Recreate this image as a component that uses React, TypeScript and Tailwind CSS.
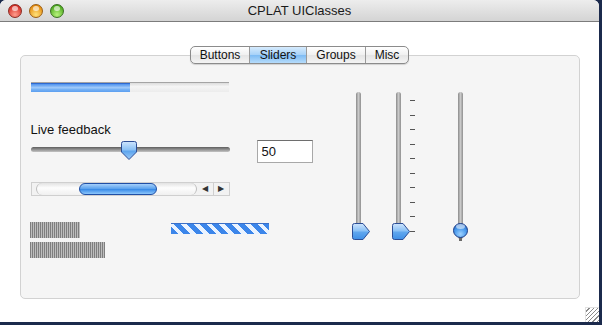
import React from 'react';

const font = "font-['Liberation_Sans',Arial,sans-serif]";

const TrafficLight: React.FC<{ from: string; to: string; ring: string }> = ({ from, to, ring }) => (
  <span
    className="relative block h-[14px] w-[14px] rounded-full border"
    style={{ background: `radial-gradient(circle at 50% 80%, ${to} 0%, ${from} 80%)`, borderColor: ring }}
  >
    <span className="absolute left-[3px] top-[1px] h-[5px] w-[6px] rounded-full bg-white/60" />
  </span>
);

const tabs = [
  { label: 'Buttons', w: 'w-[58px]' },
  { label: 'Sliders', w: 'w-[57px]', active: true },
  { label: 'Groups', w: 'w-[59px]' },
  { label: 'Misc', w: 'w-[43px]' },
];

const VThumb: React.FC<{ id: string }> = ({ id }) => (
  <svg width="18" height="17" viewBox="0 0 18 17">
    <defs>
      <linearGradient id={id} x1="0" y1="0" x2="0" y2="1">
        <stop offset="0" stopColor="#cfe5fd" />
        <stop offset="0.45" stopColor="#8cc2f6" />
        <stop offset="0.55" stopColor="#5fa6ee" />
        <stop offset="1" stopColor="#3f8fe6" />
      </linearGradient>
    </defs>
    <path
      d="M2.5 0.5 H11 L17.5 8.5 L11 16.5 H2.5 Q0.5 16.5 0.5 14.5 V2.5 Q0.5 0.5 2.5 0.5 Z"
      fill={`url(#${id})`}
      stroke="#2c4d96"
    />
  </svg>
);

const VSlider: React.FC<{ id: string; round?: boolean }> = ({ id, round }) => (
  <div className={`relative h-[150px] ${round ? 'w-[15px]' : 'w-[18px]'}`}>
    <div
      className={`h-[147px] w-[5px] rounded-full bg-[linear-gradient(to_right,#8a8a8a,#c9c9c9_50%,#8f8f8f)] ${round ? 'ml-[5px]' : 'ml-[4px]'}`}
    />
    {round ? (
      <svg className="absolute left-0 top-[130px]" width="15" height="19" viewBox="0 0 15 19">
        <defs>
          <radialGradient id={id} cx="0.5" cy="0.75" r="0.7">
            <stop offset="0" stopColor="#9fd2ff" />
            <stop offset="0.6" stopColor="#4b9bec" />
            <stop offset="1" stopColor="#2f73cc" />
          </radialGradient>
        </defs>
        <rect x="6" y="12" width="3" height="7" fill="#6a6a6a" />
        <circle cx="7.5" cy="8.5" r="7" fill={`url(#${id})`} stroke="#1f3f88" />
        <ellipse cx="7.5" cy="4.5" rx="4.5" ry="2.5" fill="#ffffff" opacity="0.55" />
      </svg>
    ) : (
      <div className="absolute left-0 top-[131px]">
        <VThumb id={id} />
      </div>
    )}
  </div>
);

export default function App() {
  return (
    <div className={`h-[325px] w-[602px] bg-[#1b2a4c] ${font}`}>
      <div className="flex h-[322px] w-[599px] flex-col overflow-hidden rounded-t-[6px] bg-white">
        {/* title bar */}
        <div className="relative flex h-[22px] shrink-0 items-center border-b border-[#7c7c7c] bg-[linear-gradient(to_bottom,#ededed,#d4d4d4)] pl-[8px]">
          <div className="flex gap-[7px]">
            <TrafficLight from="#d42a22" to="#ff9c8c" ring="#8a2a22" />
            <TrafficLight from="#e58a0c" to="#ffe27a" ring="#9a5e14" />
            <TrafficLight from="#4aa81c" to="#b8f27c" ring="#3a7020" />
          </div>
          <div className="absolute inset-x-0 top-0 flex h-[21px] items-center justify-center text-[13px] text-[#1a1a1a]">
            CPLAT UIClasses
          </div>
        </div>

        {/* content */}
        <div className="relative flex flex-1 flex-col items-center">
          {/* tabs */}
          <div className="relative z-10 mt-[24px] flex h-[18px] overflow-hidden rounded-[5px] border border-[#8b8b8b] bg-[linear-gradient(to_bottom,#ffffff,#f0f0f0_50%,#e4e4e4_51%,#f4f4f4)] text-[12px] text-[#111] shadow-[0_1px_1px_rgba(0,0,0,0.15)]">
            {tabs.map((t, i) => (
              <div
                key={t.label}
                className={`flex items-center justify-center ${t.w} ${i > 0 ? 'border-l border-[#9a9a9a]' : ''} ${
                  t.active ? 'bg-[linear-gradient(to_bottom,#d6ebfd,#a6d1f8_50%,#7dbbf4_51%,#b6dcfb)]' : ''
                }`}
              >
                {t.label}
              </div>
            ))}
          </div>

          {/* group box */}
          <div className="-mt-[9px] flex h-[244px] w-[560px] rounded-[5px] border border-[#d2d2d2] bg-[#f5f5f5]">
            {/* left column */}
            <div className="flex w-[331px] flex-col pl-[10px]">
              {/* progress bar */}
              <div className="mt-[26px] flex h-[10px] w-[198px] overflow-hidden border-t border-[#a4a4a4] bg-[linear-gradient(to_bottom,#dcdcdc,#f5f5f5_40%,#ececec)]">
                <div className="h-full w-[99px] border-t border-[#2f6ad0] bg-[linear-gradient(to_bottom,#4d92ee,#a8d0fb_50%,#7cb6f6_60%,#5c9ff0)]" />
              </div>

              <div className="mt-[30px] h-[16px] text-[13px] leading-[16px] text-[#111]">Live feedback</div>

              {/* slider + field */}
              <div className="mt-[3px] flex items-start">
                <div className="relative h-[23px] w-[199px]">
                  <div className="mt-[6px] h-[5px] w-full rounded-full bg-[linear-gradient(to_bottom,#5e5e5e,#9a9a9a_60%,#c4c4c4)]" />
                  <svg className="absolute left-[90px] top-[0px]" width="16" height="19" viewBox="0 0 16 19">
                    <defs>
                      <linearGradient id="ht" x1="0" y1="0" x2="0" y2="1">
                        <stop offset="0" stopColor="#cfe5fd" />
                        <stop offset="0.45" stopColor="#8cc2f6" />
                        <stop offset="0.55" stopColor="#5fa6ee" />
                        <stop offset="1" stopColor="#9ccaf6" />
                      </linearGradient>
                    </defs>
                    <path
                      d="M0.5 2.5 Q0.5 0.5 2.5 0.5 H13.5 Q15.5 0.5 15.5 2.5 V11 L8 18.5 L0.5 11 Z"
                      fill="url(#ht)"
                      stroke="#2c4d96"
                    />
                  </svg>
                </div>
                <div className="ml-[27px] -mt-[1px] flex h-[23px] w-[56px] items-center border border-[#a8a8a8] border-t-[#6e6e6e] bg-white pl-[4px] text-[13px] text-[#111]">
                  50
                </div>
              </div>

              {/* scrollbar */}
              <div className="mt-[18px] flex h-[14px] w-[199px] border border-[#cfcfcf] bg-[#f2f2f2]">
                <div className="relative ml-[4px] h-full flex-1 rounded-full border-x border-[#bdbdbd] bg-[linear-gradient(to_bottom,#e2e2e2,#fdfdfd_40%,#f0f0f0)]">
                  <div className="absolute left-[42px] top-0 h-[12px] w-[78px] rounded-full border border-[#1f4fa6] bg-[linear-gradient(to_bottom,#a6d0fb,#5ea4ee_45%,#3c8de8_55%,#8cc6fb)]" />
                </div>
                <div className="flex w-[16px] items-center justify-center text-[8px] leading-none text-[#333]">◀</div>
                <div className="flex w-[16px] items-center justify-center border-l border-[#cfcfcf] text-[8px] leading-none text-[#333]">▶</div>
              </div>

              {/* bars */}
              <div className="mt-[26px] flex items-start">
                <div className="-ml-[1px] flex flex-col gap-[4px]">
                  <div className="h-[16px] w-[50px] bg-[repeating-linear-gradient(to_right,#7e7e7e_0px,#7e7e7e_1px,#bdbdbd_1px,#bdbdbd_2px)]" />
                  <div className="h-[16px] w-[75px] bg-[repeating-linear-gradient(to_right,#7e7e7e_0px,#7e7e7e_1px,#bdbdbd_1px,#bdbdbd_2px)]" />
                </div>
                <div className="ml-[66px] mt-[1px] h-[11px] w-[98px] border-t border-[#3a6fc8] bg-[repeating-linear-gradient(45deg,#3c86ea_0px,#3c86ea_5px,#eaf3ff_5px,#eaf3ff_9px)]" />
              </div>
            </div>

            {/* vertical sliders */}
            <div className="flex items-start pt-[36px]">
              <VSlider id="v1" />
              <div className="ml-[22px] flex">
                <VSlider id="v2" />
                <div className="mt-[8px] flex h-[132px] flex-col justify-between">
                  {Array.from({ length: 10 }).map((_, i) => (
                    <div key={i} className="h-[1px] w-[5px] bg-[#555]" />
                  ))}
                </div>
              </div>
              <div className="ml-[38px]">
                <VSlider id="v3" round />
              </div>
            </div>
          </div>

          {/* resize grip */}
          <div className="absolute bottom-0 right-0 h-[15px] w-[14px] border-l border-t border-[#e2e2e2] bg-[repeating-linear-gradient(135deg,#ffffff_0px,#ffffff_2px,#8a8a8a_2px,#8a8a8a_3px)]" />
        </div>
      </div>
    </div>
  );
}
